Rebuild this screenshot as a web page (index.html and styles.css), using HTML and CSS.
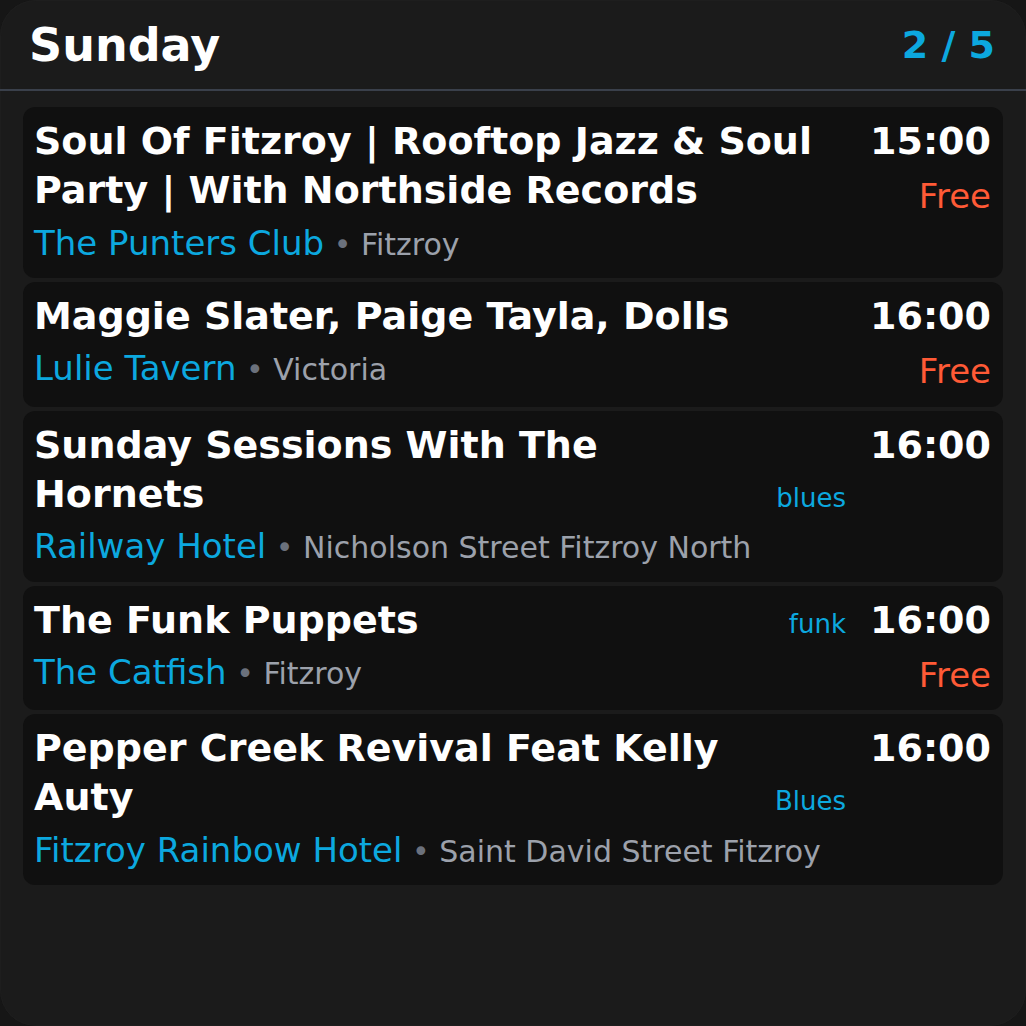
FILE: index.html
```html
<!DOCTYPE html>
<html lang="en">
<head>
<meta charset="utf-8">
<title>Sunday</title>
<link rel="stylesheet" href="styles.css">
</head>
<body>
<div class="panel">
  <header class="header">
    <h1 class="day">Sunday</h1>
    <div class="count">2 / 5</div>
  </header>
  <div class="list">
    <div class="card">
      <div class="main">
        <div class="top">
          <div class="title">Soul Of Fitzroy | Rooftop Jazz &amp; Soul Party | With Northside Records</div>
        </div>
        <div class="where"><span class="venue">The Punters Club</span><span class="dot"> • </span><span class="suburb">Fitzroy</span></div>
      </div>
      <div class="side">
        <div class="time">15:00</div>
        <div class="price">Free</div>
      </div>
    </div>
    <div class="card">
      <div class="main">
        <div class="top">
          <div class="title">Maggie Slater, Paige Tayla, Dolls</div>
        </div>
        <div class="where"><span class="venue">Lulie Tavern</span><span class="dot"> • </span><span class="suburb">Victoria</span></div>
      </div>
      <div class="side">
        <div class="time">16:00</div>
        <div class="price">Free</div>
      </div>
    </div>
    <div class="card">
      <div class="main">
        <div class="top">
          <div class="title">Sunday Sessions With The Hornets</div>
          <div class="tag">blues</div>
        </div>
        <div class="where"><span class="venue">Railway Hotel</span><span class="dot"> • </span><span class="suburb">Nicholson Street Fitzroy North</span></div>
      </div>
      <div class="side">
        <div class="time">16:00</div>
      </div>
    </div>
    <div class="card">
      <div class="main">
        <div class="top">
          <div class="title">The Funk Puppets</div>
          <div class="tag">funk</div>
        </div>
        <div class="where"><span class="venue">The Catfish</span><span class="dot"> • </span><span class="suburb">Fitzroy</span></div>
      </div>
      <div class="side">
        <div class="time">16:00</div>
        <div class="price">Free</div>
      </div>
    </div>
    <div class="card">
      <div class="main">
        <div class="top">
          <div class="title">Pepper Creek Revival Feat Kelly Auty</div>
          <div class="tag">Blues</div>
        </div>
        <div class="where"><span class="venue">Fitzroy Rainbow Hotel</span><span class="dot"> • </span><span class="suburb">Saint David Street Fitzroy</span></div>
      </div>
      <div class="side">
        <div class="time">16:00</div>
      </div>
    </div>
  </div>
</div>
</body>
</html>
```
FILE: styles.css
```css
html, body {
  margin: 0;
  padding: 0;
  background: #161616;
}
body {
  font-family: "DejaVu Sans", "Liberation Sans", sans-serif;
  color: #ffffff;
}
.panel {
  min-height: 1026px;
  box-sizing: border-box;
  background: #1b1b1b;
  border-radius: 36px;
  box-shadow: inset 0 0 0 1px #1e1e1e;
}
.header {
  box-sizing: border-box;
  height: 91px;
  display: flex;
  justify-content: space-between;
  align-items: center;
  padding: 2px 31px 0 29px;
  border-bottom: 2px solid #3a404b;
}
.day {
  margin: 0;
  font-size: 46px;
  font-weight: bold;
  line-height: 1.164;
}
.count {
  font-size: 38px;
  font-weight: bold;
  line-height: 1.164;
  color: #0ca8df;
}
.list {
  padding: 16px 23px 0;
}
.card {
  display: flex;
  gap: 24px;
  padding: 10px 12px 13px 11px;
  background: #101010;
  border-radius: 12px;
  margin-bottom: 4px;
}
.main {
  flex: 1;
  min-width: 0;
}
.top {
  display: flex;
  align-items: last baseline;
  gap: 12px;
}
.title {
  flex: 1;
  min-width: 0;
  font-size: 38px;
  line-height: 1.3;
  font-weight: bold;
}
.tag {
  flex: none;
  font-size: 26px;
  color: #0ca8df;
}
.where {
  margin-top: 5px;
  font-size: 34px;
  line-height: 1.3;
}
.venue {
  color: #0ca8df;
}
.dot {
  font-size: 30px;
  color: #6b717c;
  white-space: pre;
}
.suburb {
  font-size: 30px;
  color: #9ca1ab;
}
.side {
  flex: none;
  display: flex;
  flex-direction: column;
  align-items: flex-end;
}
.time {
  font-size: 38px;
  line-height: 1.3;
  font-weight: bold;
}
.price {
  margin-top: 8px;
  font-size: 34px;
  line-height: 1.3;
  color: #ff5a36;
}
```
